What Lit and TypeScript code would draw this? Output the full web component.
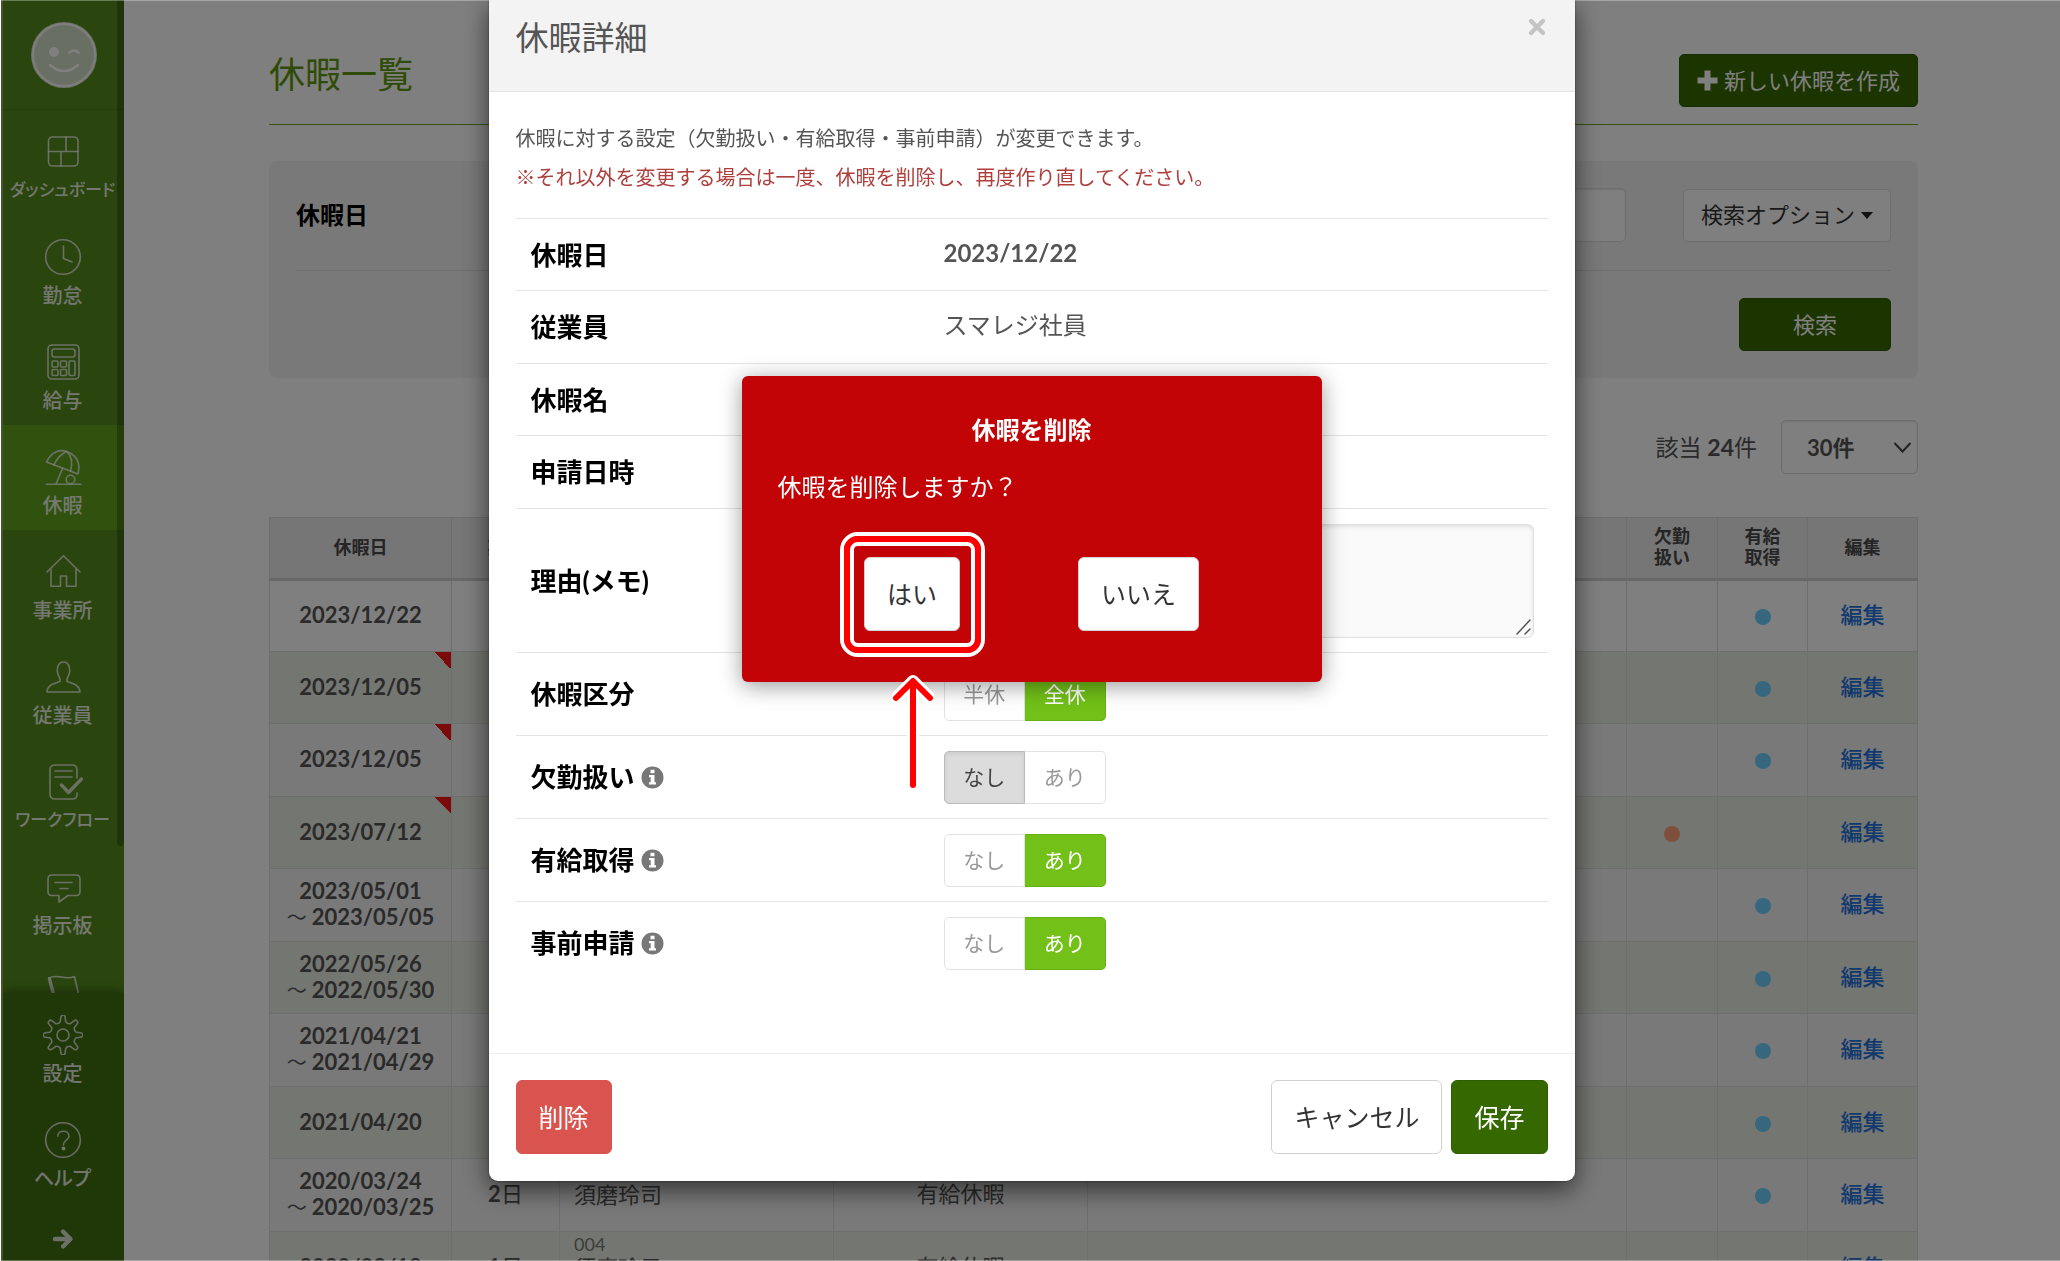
import { LitElement, html, css, svg, nothing } from "lit";
import { customElement, property } from "lit/decorators.js";
import { classMap } from "lit/directives/class-map.js";

const gearPath = (() => {
  const pts: string[] = [];
  const at = (r: number, deg: number) => {
    const a = (deg * Math.PI) / 180;
    return `${(20 + r * Math.cos(a)).toFixed(2)} ${(20 + r * Math.sin(a)).toFixed(2)}`;
  };
  for (let i = 0; i < 8; i++) {
    const c = i * 45 - 90;
    pts.push(`${i === 0 ? "M" : "L"}${at(13.5, c - 12)}`);
    pts.push(`L${at(17.8, c - 7)}`);
    pts.push(`A2 2 0 0 1 ${at(17.8, c + 7)}`);
    pts.push(`L${at(13.5, c + 12)}`);
    pts.push(`Q${at(11.6, c + 22.5)} ${at(13.5, c + 33)}`);
  }
  return pts.join("") + "Z";
})();

const icons = {
  dashboard: svg`<rect x="5.5" y="5" width="29.5" height="29" rx="4"/><path d="M5.5 19.5H35M23 5V19.500M18 19.500V34"/>`,
  clock: svg`<circle cx="20" cy="20" r="17.300"/><path d="M20.500 9V21.500L29 25"/>`,
  calc: svg`<rect x="5" y="3" width="31" height="34" rx="4"/><rect x="9" y="7" width="23" height="8" rx="2.500"/><rect x="9" y="19" width="6" height="6" rx="1"/><rect x="17.500" y="19" width="6" height="6" rx="1"/><rect x="9" y="27.500" width="6" height="6" rx="1"/><rect x="17.500" y="27.500" width="6" height="6" rx="1"/><rect x="26" y="19" width="6" height="14.500" rx="1"/>`,
  umbrella: svg`<path d="M3.500 15C8 5 17 1.500 25 5C34 9 37.500 17 35 27Z"/><path d="M11 18C14 11 18 7 23.500 4.500C29 9 29.500 17 27.500 24.500M19.500 21.500L13 37M3.500 37.200H38"/><circle cx="27.500" cy="32.500" r="4.300"/>`,
  house: svg`<path d="M4 20L20.500 3.800L37 20M8 16.500V34.200H17.500V24H23.500V34.200H33V16.500"/>`,
  person: svg`<path d="M17 24.500C18 21 15.500 20 14.800 16.500C14 15 13.500 5 20.500 5C27.500 5 27 15 26.200 16.500C25.500 20 23 21 24 24.500C31 27 36.500 28 37 35H4C4.500 28 10 27 17 24.500Z"/>`,
  workflow: svg`<path d="M34 16V8Q34 3 29 3H12Q7 3 7 8V32Q7 37 12 37H29Q34 37 34 32.500V31M12 9H29M12 15H29"/><path class="bold" d="M18.500 23L25.500 30.500L38.500 17"/>`,
  board: svg`<path d="M9 8H33Q37 8 37 12V24.500Q37 28.500 33 28.500H25L16 35V28.500H9Q5 28.500 5 24.500V12Q5 8 9 8ZM12 15.500H29M17 21.500H25"/>`,
  flag: svg`<path class="bold" d="M6.500 7L11 24"/><path d="M6 6C14 1 22 9 31.500 4.500L36 24"/>`,
  gear: svg`<path d=${gearPath}/><circle cx="20" cy="20" r="6"/>`,
  help: svg`<circle cx="20" cy="20" r="17.300"/><path d="M14.800 16.200C14.800 9.500 26 9.500 26 16.200C26 20 20.500 20 20.500 25"/><circle class="fill" cx="20.500" cy="28.500" r="1.200"/>`,
};
type IconName = keyof typeof icons;

@customElement("menu-icon")
class MenuIcon extends LitElement {
  @property() name: IconName = "dashboard";
  static styles = css`
    :host { display: block; width: 40px; height: 40px; }
    svg { display: block; width: 40px; height: 40px; fill: none; stroke: rgba(255, 255, 255, 0.75); stroke-width: 1.6; stroke-linecap: round; stroke-linejoin: round; }
    .bold { stroke-width: 3.4; }
    .fill { fill: rgba(255, 255, 255, 0.75); }
  `;
  render() {
    return html`<svg viewBox="0 0 40 40" aria-hidden="true">${icons[this.name]}</svg>`;
  }
}

interface MenuEntry { icon: IconName; label: string; active?: boolean; }
const menu: MenuEntry[] = [
  { icon: "dashboard", label: "ダッシュボード" },
  { icon: "clock", label: "勤怠" },
  { icon: "calc", label: "給与" },
  { icon: "umbrella", label: "休暇", active: true },
  { icon: "house", label: "事業所" },
  { icon: "person", label: "従業員" },
  { icon: "workflow", label: "ワークフロー" },
  { icon: "board", label: "掲示板" },
  { icon: "flag", label: "" },
];
const footMenu: MenuEntry[] = [
  { icon: "gear", label: "設定" },
  { icon: "help", label: "ヘルプ" },
];

@customElement("side-menu")
class SideMenu extends LitElement {
  static styles = css`
    :host { display: flex; flex-direction: column; flex: none; width: 123px; height: 100%; background: #548c1c; border-left: 2px solid #87ad62; box-sizing: border-box; position: relative; overflow: hidden; }
    .avatar { flex: none; display: flex; justify-content: center; padding: 21px 0 20px; border-bottom: 1px solid #4a7f14; }
    .avatar svg { display: block; width: 68px; height: 68px; }
    .list { flex: 1; min-height: 0; overflow: hidden; }
    .item { display: flex; flex-direction: column; align-items: center; height: 105px; box-sizing: border-box; padding: 22px 2px 0 0; gap: 3px; text-decoration: none; color: rgba(255, 255, 255, 0.88); font-size: 20px; line-height: 30px; font-weight: 500; white-space: nowrap; }
    .label { font-feature-settings: "palt"; }
    .long { font-size: 17px; }
    .active { background: #62a41e; }
    .foot { flex: none; background: #407010; box-shadow: 0 -2px 9px rgba(0, 0, 0, 0.35); }
    .expand { display: flex; justify-content: center; align-items: center; width: 100%; height: 58px; padding: 14px 2px 0 0; border: 0; background: none; box-sizing: border-box; }
    .bar { position: absolute; top: 0; right: 0; width: 7px; height: 846px; border-radius: 0 0 4px 4px; background: rgba(0, 0, 0, 0.25); }
  `;
  private item(m: MenuEntry) {
    return html`<a href="#" class=${classMap({ item: true, active: !!m.active })}>
      <menu-icon name=${m.icon}></menu-icon><span class=${classMap({ label: true, long: m.label.length > 5 })}>${m.label}</span>
    </a>`;
  }
  render() {
    return html`
      <div class="avatar">
        <svg viewBox="0 0 68 68" aria-hidden="true">
          <circle cx="34" cy="34" r="33" fill="#e4eadc"/>
          <circle cx="34" cy="34" r="29.500" fill="#d4dec6"/>
          <circle cx="34" cy="34" r="31" fill="none" stroke="#fff" stroke-width="1.500"/>
          <circle cx="24" cy="31" r="5" fill="#fff"/>
          <path d="M39 32Q44 27 49 32M20 44Q34 56 48 44" fill="none" stroke="#fff" stroke-width="2.400" stroke-linecap="round"/>
        </svg>
      </div>
      <nav class="list">${menu.map((m) => this.item(m))}</nav>
      <div class="bar"></div>
      <nav class="foot">
        ${footMenu.map((m) => this.item(m))}
        <button class="expand" aria-label="メニューを開く">
          <svg width="22" height="22" viewBox="0 0 22 22" fill="none" stroke="rgba(255,255,255,.8)" stroke-width="4.400" stroke-linejoin="round" stroke-linecap="round"><path d="M3 11H17M11 3.500L18.500 11L11 18.500"/></svg>
        </button>
      </nav>`;
  }
}

interface Leave { from: string; to?: string; flag?: boolean; dot: "paid" | "absent"; days?: string; no?: string; name?: string; kind?: string; }
const leaves: Leave[] = [
  { from: "2023/12/22", dot: "paid" },
  { from: "2023/12/05", dot: "paid", flag: true },
  { from: "2023/12/05", dot: "paid", flag: true },
  { from: "2023/07/12", dot: "absent", flag: true },
  { from: "2023/05/01", to: "2023/05/05", dot: "paid" },
  { from: "2022/05/26", to: "2022/05/30", dot: "paid" },
  { from: "2021/04/21", to: "2021/04/29", dot: "paid" },
  { from: "2021/04/20", dot: "paid" },
  { from: "2020/03/24", to: "2020/03/25", dot: "paid", days: "2", no: "003", name: "須磨玲司", kind: "有給休暇" },
  { from: "2020/02/18", dot: "paid", days: "1", no: "004", name: "須磨玲子", kind: "有給休暇" },
];

@customElement("leave-list")
class LeaveList extends LitElement {
  static styles = css`
    :host { display: block; flex: 1; min-width: 0; padding: 54px 142px 0 145px; box-sizing: border-box; }
    .head { display: flex; justify-content: space-between; align-items: flex-start; padding-bottom: 17px; border-bottom: 1px solid #6aa812; }
    h1 { margin: 0; font-size: 36px; line-height: 40px; font-weight: 400; color: #5f980c; }
    button, select, input { font-family: inherit; box-sizing: border-box; }
    .btn { display: flex; align-items: center; justify-content: center; height: 53px; border-radius: 5px; font-size: 22px; line-height: 30px; padding: 0 17px; border: 1px solid #2c5c00; background: #366800; color: #fff; }
    .create { gap: 6px; }
    .plain { background: #fff; color: #333; border-color: #ddd; gap: 6px; }
    .caret { border: 6px solid transparent; border-top: 7px solid #222; border-bottom: 0; }
    .wide { width: 152px; margin-left: auto; }
    .panel { margin-top: 36px; padding: 27px; border-radius: 8px; background: #f3f3f3; }
    .cond { display: flex; align-items: center; justify-content: space-between; padding-bottom: 28px; border-bottom: 1px solid #dcdcdc; margin-bottom: 27px; }
    .cond label { font-size: 24px; line-height: 30px; font-weight: 700; color: #000; flex: none; width: 200px; }
    .date { flex: 1; min-width: 0; height: 54px; border: 1px solid #ddd; border-radius: 5px; background: #fff; margin-right: 57px; box-shadow: inset 0 1px 2px rgba(0, 0, 0, 0.1); font-size: 22px; }
    .count { display: flex; align-items: center; justify-content: flex-end; gap: 24px; margin: 42px 0 43px; font-size: 23px; line-height: 30px; color: #555; }
    .pick { display: grid; align-items: center; }
    .pick > * { grid-area: 1 / 1; }
    .pick svg { justify-self: end; margin-right: 7px; pointer-events: none; }
    select { appearance: none; width: 137px; height: 54px; border: 1px solid #d8d8d8; border-radius: 5px; background: #fff; padding: 0 25px; font-size: 22px; font-weight: 700; color: #555; box-shadow: inset 0 1px 2px rgba(0, 0, 0, 0.1); }
    table { width: 100%; table-layout: fixed; border-collapse: collapse; color: #555; font-size: 22px; line-height: 26px; }
    th, td { border: 1px solid #dcdcdc; padding: 0 0 2px; text-align: center; box-sizing: border-box; }
    th { height: 62px; background: #ededed; border-bottom: 3px solid #d0d0d0; font-size: 18px; line-height: 21px; color: #4a4a4a; }
    td { height: 72px; }
    tr:nth-child(odd) td { height: 73px; background: #f2f2f2; }
    tr:first-child td { height: 72px; background: #fff; }
    tr:nth-child(even) td { background: #e9ede3; }
    .c1 { width: 182px; } .c2 { width: 108px; } .c3 { width: 274px; } .c4 { width: 254px; }
    .c6 { width: 91px; } .c7 { width: 90px; } .c8 { width: 110px; }
    tr td.flag { background-image: linear-gradient(to bottom left, #f81414 50%, transparent 50%); background-size: 17px 17px; background-repeat: no-repeat; background-position: top right; }
    .till { font-size: 20px; }
    .till b { font-size: 22px; }
    td.who { text-align: left; padding: 0 0 22px 14px; }
    .no { display: block; font-size: 18px; line-height: 22px; color: #777; }
    .dot { display: inline-block; width: 16px; height: 16px; border-radius: 50%; vertical-align: middle; background: #6ccfff; }
    .absent { background: #ff9f7c; }
    a { color: #2472dc; text-decoration: none; font-weight: 500; }
  `;
  private row(l: Leave) {
    return html`<tr>
      <td class=${classMap({ flag: !!l.flag })}><b>${l.from}</b>${l.to ? html`<br /><span class="till">〜 <b>${l.to}</b></span>` : nothing}</td>
      <td>${l.days ? html`<b>${l.days}</b>日` : nothing}</td>
      <td class="who">${l.name ? html`<span class="no">${l.no}</span>${l.name}` : nothing}</td>
      <td>${l.kind ?? nothing}</td>
      <td></td>
      <td>${l.dot === "absent" ? html`<span class="dot absent"></span>` : nothing}</td>
      <td>${l.dot === "paid" ? html`<span class="dot"></span>` : nothing}</td>
      <td><a href="#">編集</a></td>
    </tr>`;
  }
  render() {
    return html`
      <header class="head">
        <h1>休暇一覧</h1>
        <button class="btn create">
          <svg width="21" height="21" viewBox="0 0 21 21" aria-hidden="true"><path d="M7.500 0.500h6v7h7v6h-7v7h-6v-7h-7v-6h7z" fill="#fff"/></svg>新しい休暇を作成
        </button>
      </header>
      <section class="panel">
        <div class="cond">
          <label for="date">休暇日</label>
          <input id="date" class="date" type="text" />
          <button class="btn plain">検索オプション<span class="caret"></span></button>
        </div>
        <button class="btn wide">検索</button>
      </section>
      <div class="count">
        <span>該当 <b>24</b>件</span>
        <div class="pick">
          <select aria-label="表示件数"><option>30件</option></select>
          <svg width="17" height="11" viewBox="0 0 17 11" fill="none" stroke="#444" stroke-width="2"><path d="M0.500 1L8.500 9.500L16.500 1"/></svg>
        </div>
      </div>
      <table>
        <colgroup><col class="c1" /><col class="c2" /><col class="c3" /><col class="c4" /><col /><col class="c6" /><col class="c7" /><col class="c8" /></colgroup>
        <thead><tr><th>休暇日</th><th>期間</th><th></th><th></th><th></th><th>欠勤<br />扱い</th><th>有給<br />取得</th><th>編集</th></tr></thead>
        <tbody>${leaves.map((l) => this.row(l))}</tbody>
      </table>`;
  }
}

interface Choice { id: string; label: string; options: [string, string]; value: number; info: boolean; }
const choices: Choice[] = [
  { id: "kind", label: "休暇区分", options: ["半休", "全休"], value: 1, info: false },
  { id: "absence", label: "欠勤扱い", options: ["なし", "あり"], value: 0, info: true },
  { id: "paid", label: "有給取得", options: ["なし", "あり"], value: 1, info: true },
  { id: "prior", label: "事前申請", options: ["なし", "あり"], value: 1, info: true },
];

@customElement("leave-dialog")
class LeaveDialog extends LitElement {
  static styles = css`
    :host { display: block; position: relative; width: 1086px; background: #fff; border-radius: 0 0 9px 9px; box-shadow: 0 8px 26px rgba(0, 0, 0, 0.6), 0 0 2px rgba(0, 0, 0, 0.5); color: #555; }
    button, textarea { font-family: inherit; box-sizing: border-box; }
    header { display: flex; justify-content: space-between; align-items: flex-start; padding: 16px 28px 33px 27px; background: #f3f3f3; border-bottom: 1px solid #e4e4e4; }
    h2 { margin: 0; font-size: 33px; line-height: 42px; font-weight: 400; }
    .close { border: 0; background: none; padding: 0; width: 20px; height: 20px; }
    .close svg { display: block; margin-top: 1px; }
    .body { padding: 31px 27px 69px; }
    p { margin: 0 0 9px; font-size: 20px; line-height: 30px; }
    .warn { color: #ae3f3c; margin-bottom: 26px; }
    .row { display: grid; grid-template-columns: 413px 1fr; align-items: center; min-height: 72px; box-sizing: border-box; border-top: 1px solid #e4e4e4; padding: 0 14px 0 15px; font-size: 24px; line-height: 30px; }
    .row:nth-of-type(even) { min-height: 73px; }
    .row.memo { min-height: 144px; }
    .row.pickrow { min-height: 83px; }
    .value { padding-bottom: 4px; }
    .label { display: flex; align-items: center; gap: 6px; font-size: 26px; line-height: 34px; font-weight: 700; color: #000; }
    .area { display: grid; }
    .area > * { grid-area: 1 / 1; }
    .area svg { place-self: end; margin: 0 3px 3px 0; pointer-events: none; }
    textarea { display: block; width: 100%; height: 114px; border: 1px solid #e0e0e0; border-radius: 6px; background: #fafafa; box-shadow: inset 0 2px 4px rgba(0, 0, 0, 0.1); font-size: 22px; resize: none; }
    .toggle { display: flex; width: 162px; height: 53px; }
    .toggle label { flex: 1; display: grid; place-items: center; box-sizing: border-box; border: 1px solid #e2e2e2; font-size: 21px; line-height: 28px; padding-bottom: 1px; color: #999; background: #fff; }
    .toggle label:first-child { border-radius: 5px 0 0 5px; }
    .toggle label:last-child { border-radius: 0 5px 5px 0; border-left: 0; }
    .toggle input { appearance: none; margin: 0; width: 0; height: 0; position: absolute; }
    .toggle .gray { background: #dcdcdc; border-color: #bbb; color: #444; box-shadow: inset 0 2px 4px rgba(0, 0, 0, 0.08); }
    .toggle .green { background: #72c018; border-color: #67b012; color: #fff; }
    footer { display: flex; align-items: center; gap: 9px; padding: 26px 27px 27px; border-top: 1px solid #eee; }
    .btn { height: 74px; padding: 0 22px; border-radius: 6px; border: 1px solid #d2d2d2; background: #fff; color: #333; font-size: 25px; line-height: 34px; white-space: nowrap; }
    .danger { background: #d9534f; border-color: #d9534f; color: #fff; margin-right: auto; }
    .save { background: #366800; border-color: #2f5d00; color: #fff; }
    .confirm { position: absolute; left: 253px; top: 376px; width: 580px; box-sizing: border-box; padding: 36px 36px 51px; border-radius: 6px; background: #c20406; box-shadow: 0 4px 22px rgba(0, 0, 0, 0.4); color: #fff; font-size: 24px; line-height: 36px; }
    .confirm h3 { margin: 0 0 21px; font-size: 24px; line-height: 36px; text-align: center; }
    .confirm p { font-size: 24px; line-height: 36px; margin: 0 0 52px; font-feature-settings: "palt" 0; }
    .acts { display: flex; justify-content: center; gap: 118px; }
    .target { position: relative; }
    .ring, .arrow { position: absolute; pointer-events: none; display: block; }
    .ring { inset: -25px -25px -26px -24px; border: 4px solid #fff; border-radius: 18px; background: none; box-sizing: border-box; }
    .ring::before { content: ""; display: block; height: 100%; box-sizing: border-box; border: 6px solid #f00; border-radius: 14px; }
    .ring::after { content: ""; position: absolute; inset: 6px; border: 4px solid #fff; border-radius: 8px; }
    .arrow { left: 28px; top: 117px; }
  `;
  private choice(c: Choice) {
    return html`<div class="row pickrow">
      <span class="label" id=${c.id}>${c.label}${c.info
        ? html`<svg width="23" height="23" viewBox="0 0 23 23" aria-hidden="true"><circle cx="11.500" cy="11.500" r="11" fill="#777"/><path d="M9.500 3.800h4v3.400h-4zM8 9h5.500v7.200H15V18.500H8V16.200h1.700V11.300H8z" fill="#fff"/></svg>`
        : nothing}</span>
      <div class="toggle" role="radiogroup" aria-labelledby=${c.id}>
        ${c.options.map((o, i) => {
          const on = c.value === i;
          return html`<label class=${classMap({ green: on && i === 1, gray: on && i === 0 })}><input type="radio" name=${c.id} ?checked=${on} />${o}</label>`;
        })}
      </div>
    </div>`;
  }
  render() {
    return html`
      <header>
        <h2>休暇詳細</h2>
        <button class="close" aria-label="閉じる"><svg width="20" height="20" viewBox="0 0 20 20" stroke="#c4c4c4" stroke-width="4.400" stroke-linecap="round"><path d="M4 4L16 16M16 4L4 16"/></svg></button>
      </header>
      <div class="body">
        <p>休暇に対する設定（欠勤扱い・有給取得・事前申請）が変更できます。</p>
        <p class="warn">※それ以外を変更する場合は一度、休暇を削除し、再度作り直してください。</p>
        <div class="row"><span class="label">休暇日</span><b class="value">2023/12/22</b></div>
        <div class="row"><span class="label">従業員</span><span class="value">スマレジ社員</span></div>
        <div class="row"><span class="label">休暇名</span></div>
        <div class="row"><span class="label">申請日時</span></div>
        <div class="row memo">
          <label class="label" for="memo">理由(メモ)</label>
          <div class="area">
            <textarea id="memo"></textarea>
            <svg width="15" height="16" viewBox="0 0 15 16" aria-hidden="true" stroke="#555" stroke-width="1.500" stroke-linecap="round"><path d="M1 15L14 1M9 15L14 10"/></svg>
          </div>
        </div>
        ${choices.map((c) => this.choice(c))}
      </div>
      <footer>
        <button class="btn danger">削除</button>
        <button class="btn">キャンセル</button>
        <button class="btn save">保存</button>
      </footer>
      <section class="confirm" role="alertdialog" aria-labelledby="ct">
        <h3 id="ct">休暇を削除</h3>
        <p>休暇を削除しますか？</p>
        <div class="acts">
          <div class="target">
            <button class="btn">はい</button>
            <span class="ring"></span>
            <svg class="arrow" width="42" height="118" viewBox="0 0 42 118" fill="none" stroke-linecap="round" stroke-linejoin="round">
              <path d="M21 7V111M4 24L21 7L38 24" stroke="#fff" stroke-width="12"/>
              <path d="M21 8V111M4 24L21 7L38 24" stroke="#f00" stroke-width="6"/>
            </svg>
          </div>
          <button class="btn">いいえ</button>
        </div>
      </section>`;
  }
}

@customElement("app-root")
class AppRoot extends LitElement {
  static styles = css`
    :host { display: block; font-family: Lato, "Noto Sans CJK JP", sans-serif; }
    .page { display: flex; height: 100vh; overflow: hidden; background: #fff; padding-left: 1px; box-sizing: border-box; }
    .shade { position: fixed; inset: 0 0 0 1px; display: flex; justify-content: center; align-items: flex-start; padding-left: 2px; background: rgba(0, 0, 0, 0.5); box-shadow: inset 0 1px 0 rgba(255, 255, 255, 0.3), inset 0 -1px 0 rgba(255, 255, 255, 0.3); }
  `;
  render() {
    return html`
      <div class="page"><side-menu></side-menu><leave-list></leave-list></div>
      <div class="shade"><leave-dialog role="dialog" aria-modal="true"></leave-dialog></div>`;
  }
}
